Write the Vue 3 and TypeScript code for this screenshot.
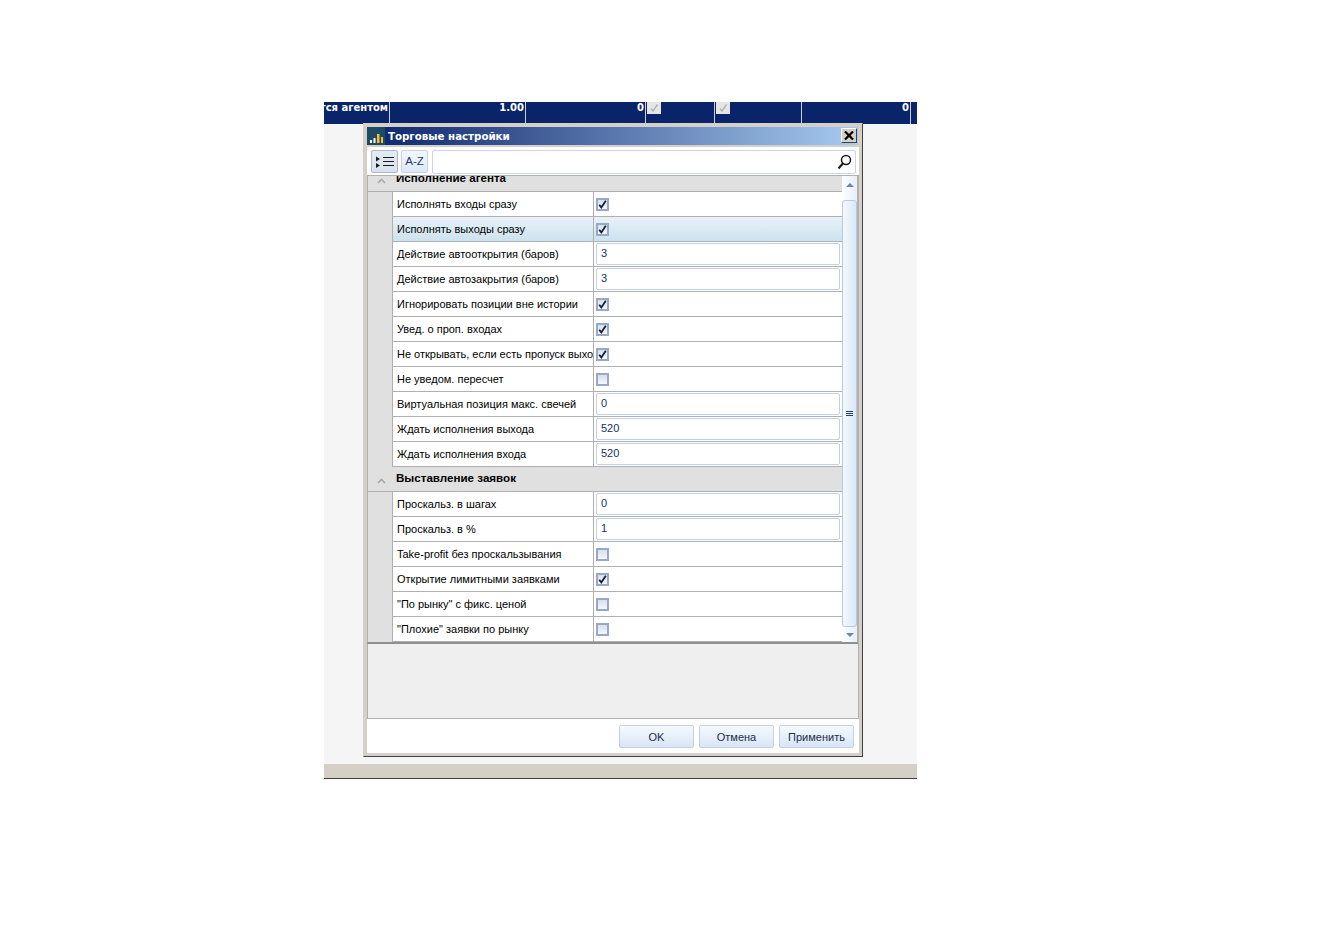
<script setup lang="ts">
// Trading settings dialog over a dark grid strip.
interface Row {
  label: string;
  kind: "check" | "input";
  checked?: boolean;
  value?: string;
  active?: boolean;
}
interface Group {
  title: string;
  rows: Row[];
}

const groups: Group[] = [
  {
    title: "Исполнение агента",
    rows: [
      { label: "Исполнять входы сразу", kind: "check", checked: true },
      { label: "Исполнять выходы сразу", kind: "check", checked: true, active: true },
      { label: "Действие автооткрытия (баров)", kind: "input", value: "3" },
      { label: "Действие автозакрытия (баров)", kind: "input", value: "3" },
      { label: "Игнорировать позиции вне истории", kind: "check", checked: true },
      { label: "Увед. о проп. входах", kind: "check", checked: true },
      { label: "Не открывать, если есть пропуск выходов", kind: "check", checked: true },
      { label: "Не уведом. пересчет", kind: "check", checked: false },
      { label: "Виртуальная позиция макс. свечей", kind: "input", value: "0" },
      { label: "Ждать исполнения выхода", kind: "input", value: "520" },
      { label: "Ждать исполнения входа", kind: "input", value: "520" },
    ],
  },
  {
    title: "Выставление заявок",
    rows: [
      { label: "Проскальз. в шагах", kind: "input", value: "0" },
      { label: "Проскальз. в %", kind: "input", value: "1" },
      { label: "Take-profit без проскальзывания", kind: "check", checked: false },
      { label: "Открытие лимитными заявками", kind: "check", checked: true },
      { label: "\"По рынку\" с фикс. ценой", kind: "check", checked: false },
      { label: "\"Плохие\" заявки по рынку", kind: "check", checked: false },
    ],
  },
];

const stripCells = [
  { width: 66, text: "тся агентом", clip: true },
  { width: 136, text: "1.00" },
  { width: 120, text: "0" },
  { width: 69, check: true },
  { width: 87, check: true },
  { width: 109, text: "0" },
  { width: 6 },
];
</script>

<template>
  <div class="page">
    <div class="desk">
      <div class="strip">
        <div
          v-for="(cell, i) in stripCells"
          :key="i"
          class="strip-cell"
          :class="{ clip: cell.clip }"
          :style="{ width: cell.width + 'px' }"
        >
          <span v-if="cell.text">{{ cell.text }}</span>
          <span v-if="cell.check" class="strip-check">
            <svg width="10" height="10" viewBox="0 0 10 10"><path d="M2 5.500 4 8 8.500 1.500" fill="none" stroke="#b4b4b4" stroke-width="1.400" /></svg>
          </span>
        </div>
      </div>
      <div class="desk-body"></div>
      <div class="desk-bottom"></div>

      <div class="dialog">
        <div class="titlebar">
          <span class="app-icon">
            <svg width="17" height="17" viewBox="0 0 17 17">
              <rect x="2" y="12" width="2" height="3" fill="#fff" />
              <rect x="5.500" y="10" width="2" height="5" fill="#fff" />
              <rect x="9" y="6" width="2.500" height="9" fill="#f2c230" />
              <rect x="13" y="9" width="2" height="6" fill="#f2c230" />
            </svg>
          </span>
          <span class="title">Торговые настройки</span>
          <span class="close">
            <svg width="10" height="9" viewBox="0 0 10 9"><path d="M1 0.500 9 8.500M9 0.500 1 8.500" stroke="#000" stroke-width="2.200" /></svg>
          </span>
        </div>

        <div class="toolbar">
          <button class="tool on">
            <svg width="18" height="13" viewBox="0 0 18 13">
              <path d="M0 1.500 4 4 0 6.500ZM0 8 4 10.500 0 13Z" fill="#1c1c1c" />
              <path d="M7 2.500H18M7 6.500H18M7 10.500H18" stroke="#1c1c1c" stroke-width="1" />
            </svg>
          </button>
          <button class="tool az">A-Z</button>
          <div class="search">
            <svg width="15" height="16" viewBox="0 0 15 16">
              <circle cx="9" cy="6" r="4.500" fill="none" stroke="#1c1c1c" stroke-width="1.500" />
              <path d="M5.800 9.500 1.500 14.500" stroke="#1c1c1c" stroke-width="2" />
            </svg>
          </div>
        </div>

        <div class="grid">
          <div class="grid-scroll">
            <div class="grid-inner">
              <div v-for="group in groups" :key="group.title" class="group">
                <div class="group-head">
                  <span class="chev">
                    <svg width="9" height="6" viewBox="0 0 9 6"><path d="M1 5 4.500 1.500 8 5" fill="none" stroke="#a8a8a8" stroke-width="1.600" /></svg>
                  </span>
                  <span class="group-title">{{ group.title }}</span>
                </div>
                <div class="group-body">
                  <div class="gutter"></div>
                  <div class="rows">
                    <div v-for="row in group.rows" :key="row.label" class="row" :class="{ active: row.active }">
                      <div class="name"><span>{{ row.label }}</span></div>
                      <div class="value">
                        <span v-if="row.kind === 'check'" class="check">
                          <svg v-if="row.checked" width="9" height="9" viewBox="0 0 9 9"><path d="M1.200 4.800 3.300 7.400 7.800 0.800" fill="none" stroke="#10203c" stroke-width="1.800" /></svg>
                        </span>
                        <span v-else class="input">{{ row.value }}</span>
                      </div>
                    </div>
                  </div>
                </div>
              </div>
            </div>
          </div>
          <div class="scrollbar">
            <span class="arrow up"></span>
            <div class="thumb"><i></i><i></i><i></i></div>
            <span class="arrow down"></span>
          </div>
        </div>

        <div class="details"></div>

        <div class="footer">
          <button class="btn">OK</button>
          <button class="btn">Отмена</button>
          <button class="btn">Применить</button>
        </div>
      </div>
    </div>
  </div>
</template>

<style>
html,
body {
  background: #fff;
}
</style>

<style scoped>
.page {
  height: 938px;
  padding: 102px 0 0 324px;
  box-sizing: border-box;
  font-family: "Liberation Sans", Arial, sans-serif;
  font-size: 11px;
  color: #000;
}
.desk {
  position: relative;
  width: 593px;
}
.strip {
  height: 22px;
  background: #0a246a;
  display: flex;
}
.strip-cell {
  box-sizing: border-box;
  border-right: 1px solid #c8d0e0;
  color: #fff;
  font: bold 10px "DejaVu Sans", sans-serif;
  text-align: right;
  padding: 0 1px 0 0;
  line-height: 11px;
  position: relative;
  overflow: hidden;
  white-space: nowrap;
  flex: none;
}
.strip-cell:last-child {
  border-right: 0;
}
.strip-cell.clip {
  direction: rtl;
}
.strip-cell span {
  display: inline-block;
}
.strip-check {
  position: absolute;
  left: 1px;
  top: 0;
  width: 14px;
  height: 12px;
  background: #e6e6e6;
  display: flex !important;
  align-items: center;
  justify-content: center;
}
.desk-body {
  height: 640px;
  background: #f5f5f5;
}
.desk-bottom {
  height: 14px;
  background: #d4d0c8;
  border-bottom: 1px solid #404040;
}
.dialog {
  position: absolute;
  left: 39px;
  top: 21px;
  width: 500px;
  height: 634px;
  box-sizing: border-box;
  background: #d4d0c8;
  border: 1px solid;
  border-color: #d4d0c8 #404040 #404040 #d4d0c8;
  padding: 3px 3px 2px 3px;
  display: flex;
  flex-direction: column;
}
.titlebar {
  height: 18px;
  flex: none;
  display: flex;
  align-items: center;
  margin: 0 1px 2px 0;
  background: linear-gradient(90deg, #0a246a, #a6caf0);
  position: relative;
}
.app-icon {
  width: 18px;
  height: 18px;
  background: #1f4a66;
  display: flex;
  align-items: center;
  justify-content: center;
  flex: none;
}
.title {
  margin-left: 3px;
  color: #fff;
  font: bold 10.25px "DejaVu Sans", sans-serif;
}
.close {
  position: absolute;
  right: 1px;
  top: 1px;
  width: 14px;
  height: 13px;
  background: #d4d0c8;
  border: 1px solid;
  border-color: #fff #404040 #404040 #fff;
  display: flex;
  align-items: center;
  justify-content: center;
}
.toolbar {
  height: 29px;
  flex: none;
  background: #fff;
  display: flex;
  align-items: center;
  padding: 1px 3px 0 4px;
  gap: 3px;
  border-bottom: 1px solid #b0b0b0;
  box-sizing: border-box;
}
.tool {
  width: 27px;
  height: 23px;
  padding: 0;
  border: 1px solid #c4d2e4;
  border-radius: 2px;
  background: linear-gradient(#f4f8fc, #dde8f5);
  display: flex;
  align-items: center;
  justify-content: center;
  font: 11.500px "Liberation Sans", sans-serif;
  color: #1f3a6e;
}
.tool.on {
  border-color: #a9b8cc;
  background: linear-gradient(#e4ebf4, #d8e2ee);
}
.tool.az {
  padding-bottom: 1px;
}
.search {
  flex: 1;
  height: 24px;
  box-sizing: border-box;
  border: 1px solid #c8d6e8;
  border-radius: 2px;
  background: #fff;
  display: flex;
  align-items: center;
  justify-content: flex-end;
  padding-right: 3px;
  margin-left: 1px;
}
.grid {
  height: 468px;
  flex: none;
  display: flex;
  background: #fff;
  border-left: 1px solid #b0b0b0;
  border-right: 2px solid #b0b0b0;
  border-bottom: 2px solid #8f8f8f;
  box-sizing: border-box;
}
.grid-scroll {
  flex: 1;
  min-width: 0;
  overflow: hidden;
}
.grid-inner {
  margin-top: -9px;
}
.group-head {
  height: 24px;
  background: #e0e0e0;
  border-bottom: 1px solid #b0b0b0;
  display: flex;
  align-items: center;
}
.chev {
  width: 26px;
  display: flex;
  justify-content: center;
  flex: none;
  padding-top: 3px;
}
.group-title {
  font-weight: bold;
  font-size: 11.600px;
  margin-left: 2px;
  padding-bottom: 3px;
}
.group-body {
  display: flex;
}
.gutter {
  width: 25px;
  box-sizing: border-box;
  flex: none;
  background: #e0e0e0;
  border-right: 1px solid #b0b0b0;
}
.rows {
  flex: 1;
  min-width: 0;
}
.row {
  height: 25px;
  box-sizing: border-box;
  display: flex;
  border-bottom: 1px solid #b0b0b0;
}
.row.active {
  background: linear-gradient(#e8f2f8, #cde2ee);
}
.name {
  width: 201px;
  flex: none;
  box-sizing: border-box;
  border-right: 1px solid #b0b0b0;
  padding-left: 4px;
  display: flex;
  align-items: center;
  overflow: hidden;
  white-space: nowrap;
}
.value {
  flex: 1;
  min-width: 0;
  display: flex;
  align-items: center;
  padding: 0 2px;
}
.check {
  width: 9px;
  height: 9px;
  border: 2px solid #9aa9c2;
  background: linear-gradient(#d8e0ec, #f4f6fa);
  display: flex;
}
.input {
  flex: 1;
  height: 22px;
  line-height: 18px;
  box-sizing: border-box;
  border: 1px solid #c3d1e6;
  border-radius: 2px;
  background: #fff;
  padding-left: 4px;
  color: #1a3060;
}
.scrollbar {
  width: 15px;
  flex: none;
  position: relative;
  background: linear-gradient(90deg, #fff, #e4eef9);
  display: flex;
  flex-direction: column;
  align-items: center;
}
.arrow {
  width: 0;
  height: 0;
  border-left: 4px solid transparent;
  border-right: 4px solid transparent;
  flex: none;
}
.arrow.up {
  border-bottom: 4px solid #6f86a6;
  margin: 7px 0 13px;
}
.arrow.down {
  border-top: 4px solid #6f86a6;
  margin-top: 6px;
}
.thumb {
  width: 15px;
  height: 427px;
  box-sizing: border-box;
  border: 1px solid #b8c8de;
  border-radius: 3px;
  background: linear-gradient(90deg, #f4f8fd, #dce8f7);
  display: flex;
  flex-direction: column;
  align-items: center;
  justify-content: center;
  gap: 1px;
}
.thumb i {
  display: block;
  width: 7px;
  height: 1px;
  background: #1f3a6e;
}
.details {
  height: 74px;
  flex: none;
  background: #efefef;
  border-left: 1px solid #b0b0b0;
  border-right: 1px solid #b0b0b0;
  border-bottom: 1px solid #b0b0b0;
}
.footer {
  flex: 1;
  background: #fff;
  display: flex;
  justify-content: flex-end;
  gap: 5px;
  padding: 6px 5px 0 0;
  margin-bottom: 1px;
}
.btn {
  width: 75px;
  height: 23px;
  padding: 0;
  border: 1px solid #c4d2e4;
  border-radius: 2px;
  background: linear-gradient(#f6f9fd, #d8e5f4);
  font: 11px "Liberation Sans", sans-serif;
  color: #1c2c4c;
}
</style>
